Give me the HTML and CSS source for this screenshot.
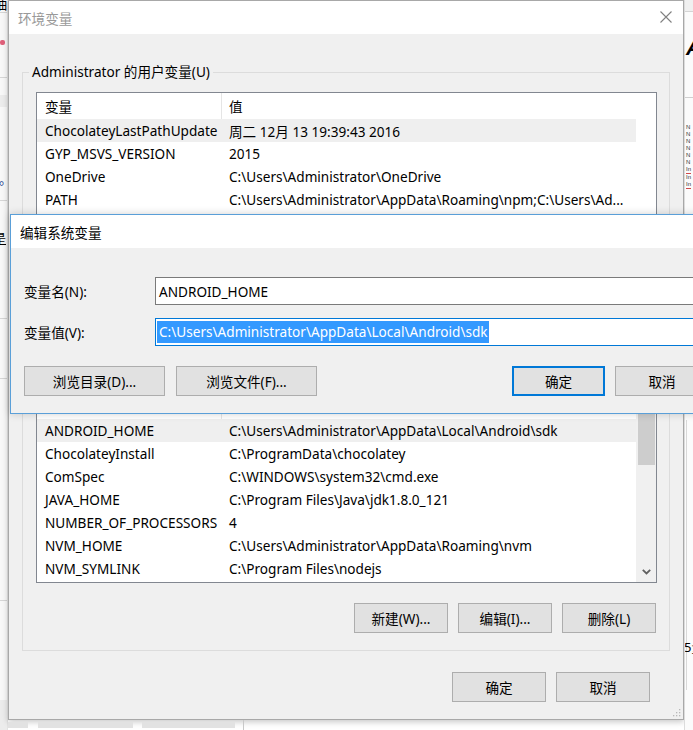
FILE: index.html
```html
<!DOCTYPE html>
<html lang="zh-CN">
<head>
<meta charset="utf-8">
<title>环境变量</title>
<link rel="stylesheet" href="styles.css">
</head>
<body>
<div class="screen">
  <div class="bg-left">
    <div class="bl-glyph top">抽</div>
    <div class="bl-line l1"></div>
    <div class="bl-pink"></div>
    <div class="bl-line l2"></div>
    <div class="bl-band"></div>
    <div class="bl-glyph dot">它。</div>
    <div class="bl-line l3"></div>
    <div class="bl-glyph shi">是</div>
    <div class="bl-line l4"></div>
    <div class="bl-line l5"></div>
    <div class="bl-line l6"></div>
    <div class="bl-band b2"></div>
  </div>

  <div class="center">
    <div class="win">
      <div class="titlebar">
        <span class="title">环境变量</span>
        <svg class="close" width="12" height="12" viewBox="0 0 12 12"><path d="M0.5 0.5 L11.5 11.5 M11.5 0.5 L0.5 11.5" stroke="#808080" stroke-width="1.1" fill="none"/></svg>
      </div>
      <div class="winbody">
        <fieldset class="group g1">
          <legend>Administrator 的用户变量(U)</legend>
          <div class="list list-user">
            <div class="lhead"><div class="c1">变量</div><div class="c2">值</div></div>
            <div class="row sel"><div class="c1">ChocolateyLastPathUpdate</div><div class="c2">周二 12月 13 19:39:43 2016</div></div>
            <div class="row"><div class="c1">GYP_MSVS_VERSION</div><div class="c2">2015</div></div>
            <div class="row"><div class="c1">OneDrive</div><div class="c2">C:\Users\Administrator\OneDrive</div></div>
            <div class="row"><div class="c1">PATH</div><div class="c2">C:\Users\Administrator\AppData\Roaming\npm;C:\Users\Ad...</div></div>
          </div>
        </fieldset>

        <fieldset class="group g2">
          <div class="list list-sys">
            <div class="lrows">
              <div class="lhead"><div class="c1"></div><div class="c2"></div></div>
              <div class="row sel"><div class="c1">ANDROID_HOME</div><div class="c2">C:\Users\Administrator\AppData\Local\Android\sdk</div></div>
              <div class="row"><div class="c1">ChocolateyInstall</div><div class="c2">C:\ProgramData\chocolatey</div></div>
              <div class="row"><div class="c1">ComSpec</div><div class="c2">C:\WINDOWS\system32\cmd.exe</div></div>
              <div class="row"><div class="c1">JAVA_HOME</div><div class="c2">C:\Program Files\Java\jdk1.8.0_121</div></div>
              <div class="row"><div class="c1">NUMBER_OF_PROCESSORS</div><div class="c2">4</div></div>
              <div class="row"><div class="c1">NVM_HOME</div><div class="c2">C:\Users\Administrator\AppData\Roaming\nvm</div></div>
              <div class="row"><div class="c1">NVM_SYMLINK</div><div class="c2">C:\Program Files\nodejs</div></div>
            </div>
            <div class="vscroll">
              <div class="thumb"></div>
              <div class="arrow-down">
                <svg width="9" height="6" viewBox="0 0 9 6"><path d="M0.8 0.8 L4.5 4.5 L8.2 0.8" stroke="#606060" stroke-width="1.8" fill="none"/></svg>
              </div>
            </div>
          </div>
          <div class="btnrow">
            <button class="btn">新建(W)...</button>
            <button class="btn">编辑(I)...</button>
            <button class="btn">删除(L)</button>
          </div>
        </fieldset>

        <div class="footer">
          <button class="btn">确定</button>
          <button class="btn">取消</button>
        </div>
      </div>
      <svg class="grip" width="9" height="9" viewBox="0 0 9 9">
        <rect x="7" y="1" width="1.3" height="1.3" fill="#b8b8b8"/>
        <rect x="4" y="4" width="1.3" height="1.3" fill="#b8b8b8"/>
        <rect x="7" y="4" width="1.3" height="1.3" fill="#b8b8b8"/>
        <rect x="1" y="7" width="1.3" height="1.3" fill="#b8b8b8"/>
        <rect x="4" y="7" width="1.3" height="1.3" fill="#b8b8b8"/>
        <rect x="7" y="7" width="1.3" height="1.3" fill="#b8b8b8"/>
      </svg>
    </div>
    <div class="under">
      <div class="ub w1"></div>
      <div class="ub w2"></div>
      <div class="ub w3"></div>
      <div class="ub-line"></div>
    </div>
  </div>

  <div class="bg-right">
    <div class="br-top"></div>
    <div class="br-a">A</div>
    <div class="br-line"></div>
    <div class="br-list">
      <span>N</span><span>N</span><span>N</span><span>N</span><span>N</span><span>N</span>
      <span class="red">In</span><span>In</span><span class="red">In</span>
    </div>
    <div class="br-vline"></div>
    <div class="br-glyph">5量</div>
  </div>

  <div class="dlg">
    <div class="dlg-title">编辑系统变量</div>
    <div class="dlg-body">
      <div class="field">
        <label>变量名(N):</label>
        <div class="input">ANDROID_HOME</div>
      </div>
      <div class="field">
        <label>变量值(V):</label>
        <div class="input focus"><span class="hl">C:\Users\Administrator\AppData\Local\Android\sdk</span></div>
      </div>
      <div class="dlg-btns">
        <button class="btn wide">浏览目录(D)...</button>
        <button class="btn wide">浏览文件(F)...</button>
        <button class="btn default ok">确定</button>
        <button class="btn cancel">取消</button>
      </div>
    </div>
  </div>
</div>
</body>
</html>
```

FILE: styles.css
```css
* { box-sizing: border-box; }
html, body { margin: 0; padding: 0; }
body {
  width: 693px;
  height: 730px;
  overflow: hidden;
  background: #ffffff;
  font-family: "Noto Sans", "Noto Sans CJK SC", sans-serif;
  font-size: 13.6px;
  color: #000;
}
.screen {
  position: relative;
  display: flex;
  width: 693px;
  height: 730px;
  overflow: hidden;
}

/* background app fragments, left */
.bg-left {
  position: relative;
  width: 8px;
  flex: none;
  background: #f8f8f8;
  overflow: hidden;
  border-right: 1px solid #e3e3e3;
}
.bl-glyph { position: absolute; font-size: 13px; line-height: 14px; white-space: nowrap; }
.bl-glyph.top { top: -3px; left: -6px; }
.bl-glyph.dot { top: 172px; left: -14px; color: #1f3f8f; }
.bl-glyph.shi { top: 231px; left: -7px; text-decoration: underline; }
.bl-line { position: absolute; left: 0; right: 0; height: 1px; background: #d6d6d6; }
.bl-line.l1 { top: 12px; }
.bl-line.l2 { top: 77px; }
.bl-line.l3 { top: 200px; }
.bl-line.l4 { top: 318px; }
.bl-line.l5 { top: 378px; }
.bl-line.l6 { top: 600px; }
.bl-pink { position: absolute; top: 40px; left: 0; width: 5px; height: 5px; background: #e0607a; border-radius: 2px; }
.bl-band { position: absolute; top: 95px; left: 0; right: 0; height: 12px; background: #ececec; }
.bl-band.b2 { top: 700px; height: 30px; }

/* main window */
.center {
  width: 676px;
  flex: none;
  display: flex;
  flex-direction: column;
}
.win {
  position: relative;
  height: 720px;
  flex: none;
  border: 1px solid #a8a8a8;
  background: #f0f0f0;
  display: flex;
  flex-direction: column;
  box-shadow: 0 2px 6px rgba(0, 0, 0, 0.22);
}
.titlebar {
  height: 33px;
  flex: none;
  background: #fff;
  display: flex;
  align-items: center;
  justify-content: space-between;
  padding: 0 11px 0 9px;
}
.title { color: #999; }
.close { display: block; margin-top: -2px; }
.winbody {
  flex: 1;
  padding: 29px 13px 0;
}
fieldset.group {
  margin: 0;
  min-width: 0;
  border: 1px solid #dcdcdc;
  padding: 0 12px 17px 13px;
}
fieldset.group legend {
  padding: 0 3px;
  margin-left: -7px;
  line-height: 18px;
}
fieldset.g1 .list { margin-top: 11px; }
fieldset.g2 { margin-top: 32px; padding-top: 19px; }

.list {
  background: #fff;
  border: 1px solid #828790;
  overflow: hidden;
}
.list-user { height: 230px; }
.list-sys { height: 191px; display: flex; }
.lrows { width: 599px; flex: none; }
.lhead { height: 26px; display: flex; width: 599px; }
.lhead .c1 {
  width: 185px;
  border-right: 1px solid #e5e5e5;
  display: flex;
  align-items: center;
}
.lhead .c2 { display: flex; align-items: center; padding-left: 7px; }
.row {
  height: 23px;
  width: 599px;
  display: flex;
  align-items: center;
}
.row.sel { background: #efefef; }
.c1 {
  width: 184px;
  flex: none;
  padding-left: 8px;
  white-space: nowrap;
  overflow: hidden;
}
.c2 {
  flex: 1;
  min-width: 0;
  padding-left: 8px;
  white-space: nowrap;
  overflow: hidden;
}
.vscroll {
  width: 20px;
  flex: none;
  background: #f0f0f0;
  display: flex;
  flex-direction: column;
  align-items: center;
}
.thumb { width: 17px; height: 72px; background: #cdcdcd; }
.arrow-down {
  margin-top: auto;
  height: 20px;
  display: flex;
  align-items: center;
  justify-content: center;
}
.arrow-down svg { display: block; }

.btn {
  width: 94px;
  height: 30px;
  padding: 0;
  background: #e1e1e1;
  border: 1px solid #adadad;
  font: inherit;
  color: #000;
  flex: none;
}
.btnrow {
  display: flex;
  justify-content: flex-end;
  gap: 10px;
  margin-top: 20px;
  padding-right: 1px;
}
.footer {
  display: flex;
  justify-content: flex-end;
  gap: 10px;
  margin-top: 21px;
  padding-right: 20px;
}
.grip { position: absolute; right: 2px; bottom: 2px; }

.under {
  position: relative;
  height: 10px;
  flex: none;
  display: flex;
  align-items: center;
}
.ub { height: 6px; background: #e2e2e2; }
.ub.w1 { width: 20px; margin-right: 10px; }
.ub.w2 { width: 95px; margin-right: 9px; }
.ub.w3 { width: 93px; }
.ub-line { width: 1px; height: 10px; background: #c8c8c8; margin-left: 8px; }

/* background app fragments, right */
.bg-right {
  position: relative;
  flex: 1;
  background: #fbfbfb;
  overflow: hidden;
  border-left: 1px solid #dcdcdc;
}
.br-top { position: absolute; top: 0; left: 0; right: 0; height: 12px; background: #f0f0f0; border-bottom: 1px solid #d4d4d4; }
.br-a { position: absolute; top: 36px; left: 1px; font-family: "Liberation Sans", sans-serif; font-weight: bold; font-style: italic; font-size: 22px; line-height: 24px; }
.br-line { position: absolute; top: 97px; left: 0; right: 0; height: 1px; background: #cfcfcf; }
.br-list { position: absolute; top: 124px; left: 1px; display: flex; flex-direction: column; font-family: "Liberation Sans", sans-serif; font-size: 6px; line-height: 7px; color: #333; }
.br-list .red { border-bottom: 1px solid #d04848; }
.br-vline { position: absolute; top: 420px; bottom: 40px; left: 1px; width: 1px; background: #d8d8d8; }
.br-glyph { position: absolute; top: 640px; left: -1px; font-size: 13px; line-height: 14px; white-space: nowrap; }

/* edit dialog (on top) */
.dlg {
  position: absolute;
  left: 10px;
  top: 214px;
  width: 720px;
  height: 200px;
  border: 1px solid #5a9fd8;
  background: #f0f0f0;
  box-shadow: 0 0 8px rgba(0, 0, 0, 0.18);
  display: flex;
  flex-direction: column;
}
.dlg-title {
  height: 33px;
  flex: none;
  background: #fff;
  padding-left: 9px;
  display: flex;
  align-items: center;
}
.dlg-body { padding: 29px 0 0 13px; }
.field { display: flex; align-items: center; height: 28px; }
.field + .field { margin-top: 13px; }
.field label { width: 131px; flex: none; }
.input {
  width: 600px;
  height: 28px;
  flex: none;
  border: 1px solid #7a7a7a;
  background: #fff;
  padding-left: 3px;
  display: flex;
  align-items: center;
  white-space: nowrap;
}
.input.focus { border-color: #0078d7; padding-left: 1px; }
.hl {
  background: #3399ff;
  color: #fff;
  line-height: 22px;
  padding: 0 1px 0 2px;
}
.dlg-btns { display: flex; margin-top: 20px; }
.btn.wide { width: 141px; }
.btn.wide + .btn.wide { margin-left: 11px; }
.btn.ok { margin-left: 195px; width: 93px; }
.btn.default { border: 1px solid #0078d7; box-shadow: inset 0 0 0 1px #0078d7; }
.btn.cancel { margin-left: 10px; }
```
